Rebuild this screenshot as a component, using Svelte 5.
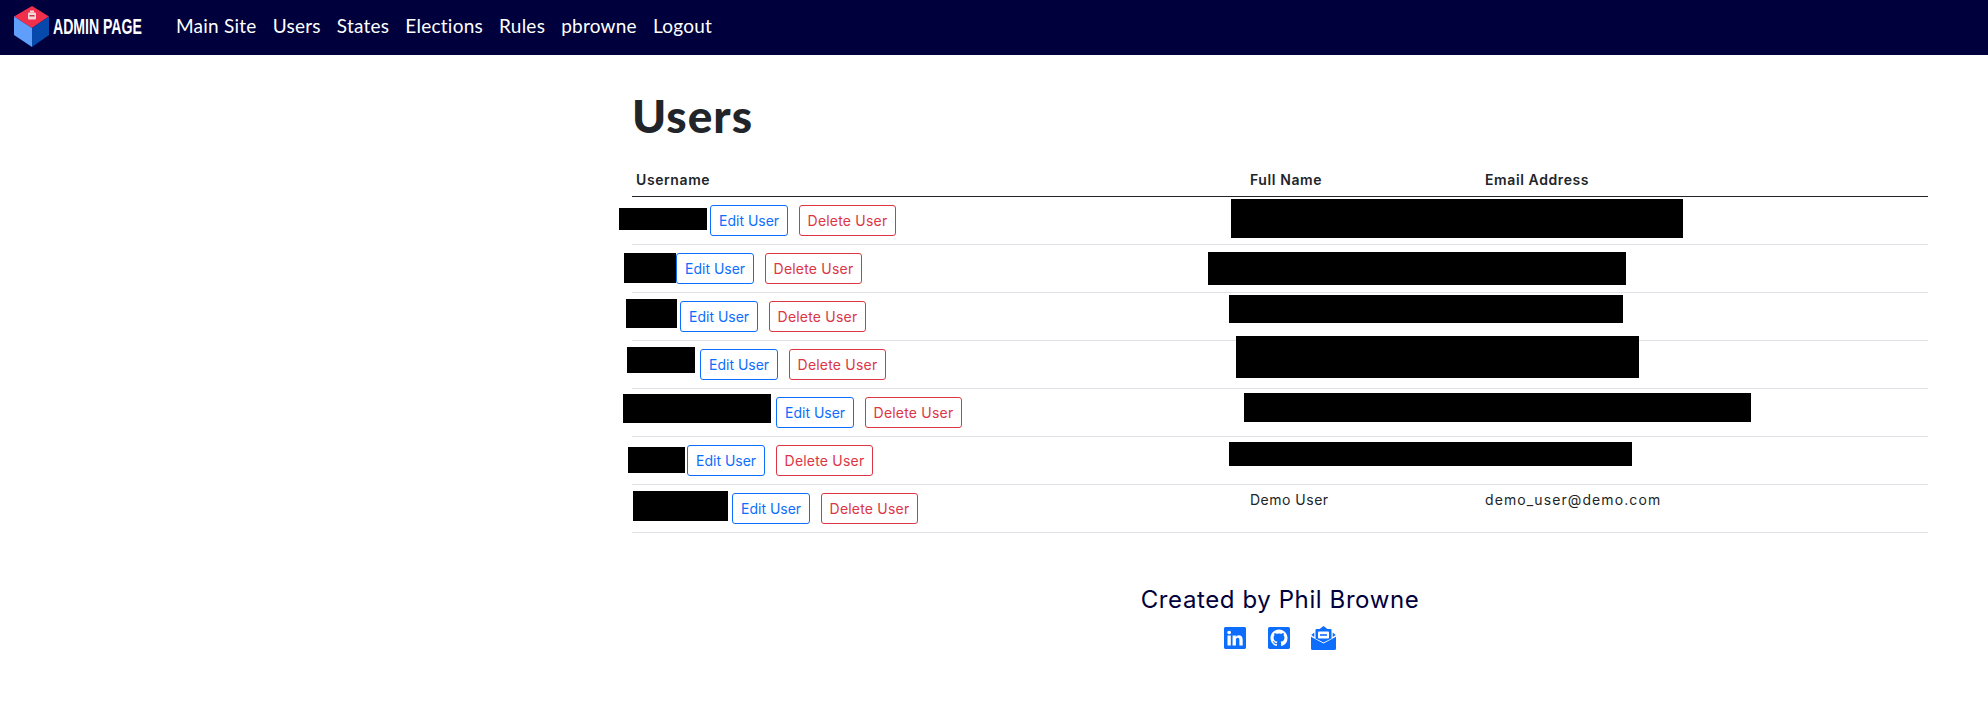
<script>
  const links = ['Main Site', 'Users', 'States', 'Elections', 'Rules', 'pbrowne', 'Logout'];

  // hidden = width of the blacked out username, boxes are the redactions on top of each row
  const users = [
    { hidden: 70, nameBox: [619, 208, 88, 22], infoBox: [1231, 199, 452, 39] },
    { hidden: 36, nameBox: [624, 253, 52, 30], infoBox: [1208, 252, 418, 33] },
    { hidden: 40, nameBox: [626, 299, 51, 29], infoBox: [1229, 295, 394, 28] },
    { hidden: 60, nameBox: [627, 347, 68, 26], infoBox: [1236, 336, 403, 42] },
    { hidden: 136, nameBox: [623, 394, 148, 29], infoBox: [1244, 393, 507, 29] },
    { hidden: 47, nameBox: [628, 447, 57, 26], infoBox: [1229, 442, 403, 24] },
    { hidden: 92, nameBox: [633, 491, 95, 30], full: 'Demo User', email: 'demo_user@demo.com' }
  ];

  const boxStyle = ([x, y, w, h]) => `left:${x}px;top:${y}px;width:${w}px;height:${h}px`;
</script>

<nav class="navbar">
  <svg class="logo" width="145" height="55" viewBox="0 0 145 55" role="img" aria-label="Admin Page">
    <path d="M32 6 49 16.500 32 28 14 16.500Z" fill="#ef2f4b" />
    <path d="M14 16.500 32 28V47L14 35Z" fill="#5f9ffb" />
    <path d="M49 16.500 32 28V47L49 35Z" fill="#0648ab" />
    <rect x="28" y="12.500" width="8" height="7" rx="1" fill="#f6d6da" />
    <rect x="30" y="10.500" width="4" height="2" fill="#f6d6da" />
    <rect x="29.500" y="15" width="5" height="1.500" fill="#c9394e" />
    <text class="logo-text" transform="translate(53 34) scale(.64 1)">ADMIN PAGE</text>
  </svg>
  <ul class="nav-links">
    {#each links as link}
      <li><a href="#top">{link}</a></li>
    {/each}
  </ul>
</nav>

<main class="content">
  <h1>Users</h1>
  <table>
    <colgroup>
      <col class="col-user" />
      <col class="col-full" />
      <col />
    </colgroup>
    <thead>
      <tr>
        <th>Username</th>
        <th>Full Name</th>
        <th>Email Address</th>
      </tr>
    </thead>
    <tbody>
      {#each users as user}
        <tr>
          <td>
            <span class="username" style="width:{user.hidden}px"></span><button class="btn edit">Edit User</button>
            <button class="btn delete">Delete User</button>
          </td>
          <td>{user.full ?? ''}</td>
          <td class="email">{user.email ?? ''}</td>
        </tr>
      {/each}
    </tbody>
  </table>

  <footer>
    <p>Created by Phil Browne</p>
    <div class="socials">
      <svg width="22" height="22" viewBox="0 0 16 16" fill="#0d6efd">
        <path d="M0 1.146C0 .513.526 0 1.175 0h13.65C15.474 0 16 .513 16 1.146v13.708c0 .633-.526 1.146-1.175 1.146H1.175C.526 16 0 15.487 0 14.854V1.146zm4.943 12.248V6.169H2.542v7.225h2.401zm-1.2-8.212c.837 0 1.358-.554 1.358-1.248-.015-.709-.52-1.248-1.342-1.248-.822 0-1.359.54-1.359 1.248 0 .694.521 1.248 1.327 1.248h.016zm4.908 8.212V9.359c0-.216.016-.432.08-.586.173-.431.568-.878 1.232-.878.869 0 1.216.662 1.216 1.634v3.865h2.401V9.25c0-2.22-1.184-3.252-2.764-3.252-1.274 0-1.845.7-2.165 1.193v.025h-.016a5.54 5.54 0 0 1 .016-.025V6.169h-2.4c.03.678 0 7.225 0 7.225h2.4z" />
      </svg>
      <svg width="22" height="22" viewBox="0 0 16 16">
        <rect width="16" height="16" rx="1.200" fill="#0d6efd" />
        <g transform="translate(1.800 1.800) scale(.775)">
          <path fill="#fff" d="M8 0C3.58 0 0 3.58 0 8c0 3.54 2.29 6.53 5.470 7.590.4.070.55-.17.55-.38 0-.19-.01-.82-.01-1.490-2.010.37-2.530-.49-2.690-.94-.09-.23-.48-.94-.82-1.130-.28-.15-.68-.52-.01-.53.63-.01 1.080.58 1.230.82.72 1.210 1.870.87 2.330.66.07-.52.28-.87.51-1.070-1.780-.2-3.640-.89-3.640-3.950 0-.87.31-1.590.82-2.150-.08-.2-.36-1.020.08-2.120 0 0 .67-.21 2.200.82.64-.18 1.320-.27 2-.27.68 0 1.360.09 2 .27 1.530-1.040 2.200-.82 2.200-.82.44 1.100.16 1.920.08 2.120.51.56.82 1.270.82 2.150 0 3.070-1.870 3.750-3.650 3.950.29.25.54.73.54 1.480 0 1.070-.01 1.930-.01 2.200 0 .21.15.46.55.38A8.012 8.012 0 0 0 16 8c0-4.420-3.580-8-8-8z" />
        </g>
      </svg>
      <svg class="mail" width="25" height="24" viewBox="0 0 25 24" fill="#0d6efd">
        <path d="M12.500 0 17 3.500H8Z" />
        <path d="M5.500 3H19.500A1 1 0 0 1 20.500 4V12.500L12.500 16.500 4.500 12.500V4A1 1 0 0 1 5.500 3Z" />
        <path d="M3.300 6.500 .3 9 3.300 11Z M21.700 6.500 24.700 9 21.700 11Z" />
        <path d="M0 10.800 12.500 17.500 25 10.800V22.500A1.500 1.500 0 0 1 23.500 24H1.500A1.500 1.500 0 0 1 0 22.500Z" />
        <rect x="7" y="5.500" width="11" height="7" rx="1" fill="#fff" />
        <rect x="9" y="8.200" width="7" height="1.600" />
      </svg>
    </div>
  </footer>
</main>

<!-- redactions sit on top of the finished page -->
{#each users as user}
  <div class="redact" style={boxStyle(user.nameBox)}></div>
  {#if user.infoBox}
    <div class="redact" style={boxStyle(user.infoBox)}></div>
  {/if}
{/each}

<style>
  :global(body) {
    margin: 0;
    background: #fff;
    color: #212529;
    font-family: "Inter", "Liberation Sans", sans-serif;
  }

  .navbar {
    display: flex;
    align-items: center;
    height: 55px;
    background: #00003c;
  }

  .logo {
    flex: none;
    margin-right: 24px;
  }

  .logo-text {
    fill: #fff;
    font-family: "Liberation Sans", sans-serif;
    font-weight: 700;
    font-size: 22px;
  }

  .nav-links {
    display: flex;
    gap: 16px;
    margin: 0;
    padding: 0 0 4px 7px;
    list-style: none;
  }

  .nav-links a {
    color: #fff;
    text-decoration: none;
    font-family: "Lato", sans-serif;
    font-size: 19px;
    letter-spacing: 0.25px;
  }

  .content {
    padding: 0 60px 0 632px;
  }

  h1 {
    margin: 0;
    padding: 38px 0 26px;
    font-family: "Lato", sans-serif;
    font-weight: 900;
    font-size: 46px;
    line-height: 46px;
    letter-spacing: 1px;
  }

  table {
    width: 100%;
    table-layout: fixed;
    border-collapse: collapse;
    font-size: 14px;
  }

  .col-user {
    width: 614px;
  }

  .col-full {
    width: 235px;
  }

  th {
    padding: 4px 4px 6px;
    height: 21px;
    line-height: 21px;
    text-align: left;
    font-weight: 600;
    font-size: 14px;
    letter-spacing: 0.6px;
    border-bottom: 1px solid #212529;
  }

  td {
    padding: 4px;
    vertical-align: top;
    line-height: 21px;
    letter-spacing: 0.5px;
    border-bottom: 1px solid #dee2e6;
  }

  .email {
    letter-spacing: 1.1px;
  }

  .username {
    display: inline-block;
  }

  .btn {
    height: 31px;
    margin: 4px;
    padding: 0 8px;
    background: #fff;
    border: 1px solid;
    border-radius: 3px;
    font: inherit;
    font-size: 14px;
    letter-spacing: 0;
    vertical-align: top;
  }

  .edit {
    color: #0d6efd;
  }

  .delete {
    margin-left: 2px;
    color: #dc3545;
    letter-spacing: 0.2px;
  }

  footer {
    padding-top: 49px;
    text-align: center;
  }

  footer p {
    margin: 0;
    color: #00003c;
    font-size: 24px;
    line-height: 36px;
    letter-spacing: 0.6px;
  }

  .socials {
    display: flex;
    justify-content: center;
    align-items: center;
    gap: 22px;
    margin-top: 8px;
  }

  .mail {
    margin-left: -1px;
  }

  .redact {
    position: absolute;
    background: #000;
  }
</style>
